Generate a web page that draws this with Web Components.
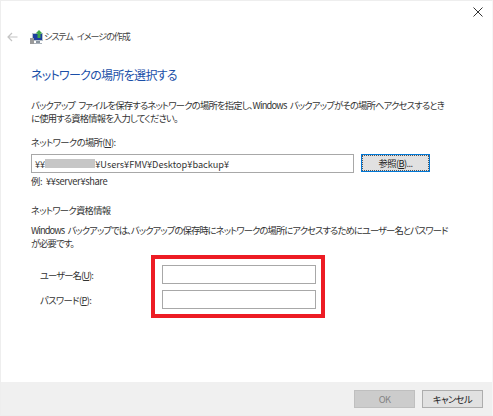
<!DOCTYPE html>
<html lang="ja">
<head>
<meta charset="utf-8">
<title>システム イメージの作成</title>
<style>
    html, body { margin: 0; padding: 0; background: #fff; }
    body { font-family: "Noto Sans CJK JP", "Noto Sans", sans-serif; font-size: 9.3px; letter-spacing: -0.6px; word-spacing: 2px; color: #222; font-feature-settings: "palt"; }
</style>
</head>
<body>
<wizard-dialog>
    <wizard-header slot="header">システム イメージの作成</wizard-header>
    <wizard-heading>ネットワークの場所を選択する</wizard-heading>
    <wizard-text top="14" tight="0.8">バックアップ ファイルを保存するネットワークの場所を指定し、Windows バックアップがその場所へアクセスするとき<br>に使用する資格情報を入力してください。</wizard-text>
    <wizard-text top="11">ネットワークの場所(<u>N</u>):</wizard-text>
    <location-row>¥¥<redacted-text></redacted-text>¥Users¥FMV¥Desktop¥backup¥</location-row>
    <wizard-text top="2" tight="0.35">例: ¥¥server¥share</wizard-text>
    <wizard-text top="16" tight="0.7">ネットワーク資格情報</wizard-text>
    <wizard-text top="7" tight="0.9">Windows バックアップでは、バックアップの保存時にネットワークの場所にアクセスするためにユーザー名とパスワード<br>が必要です。</wizard-text>
    <credential-form></credential-form>
    <wizard-footer slot="footer"></wizard-footer>
</wizard-dialog>

<script>
class WizardDialog extends HTMLElement {
    connectedCallback() {
        this.attachShadow({ mode: 'open' });
        this.shadowRoot.innerHTML = `
            <style>
                :host {
                    display: flex;
                    flex-direction: column;
                    box-sizing: border-box;
                    width: 493px;
                    height: 416px;
                    border: 1px solid #eee;
                    border-right-color: #f6f6f6;
                    background: #fff;
                }
                .body {
                    flex: 1;
                    display: flex;
                    flex-direction: column;
                    padding: 0 0 0 30px;
                }
            </style>
            <slot name="header"></slot>
            <div class="body"><slot></slot></div>
            <slot name="footer"></slot>
        `;
    }
}

class WizardHeader extends HTMLElement {
    connectedCallback() {
        this.attachShadow({ mode: 'open' });
        this.shadowRoot.innerHTML = `
            <style>
                :host { display: block; height: 64px; }
                .close { display: flex; justify-content: flex-end; padding: 4px 7px 0 0; height: 20px; }
                .nav { display: flex; align-items: center; height: 20px; margin-top: 2px; color: #444; font-size: 9px; letter-spacing: -1px; word-spacing: 3px; }
                .back { margin-left: 6px; }
                .app { margin-left: 12px; }
                .title { margin-left: 7px; line-height: 20px; }
            </style>
            <div class="close">
                <svg width="14" height="14" viewBox="0 0 14 14"><path d="M2.5 2.5 L11.5 11.5 M11.5 2.5 L2.5 11.5" stroke="#333" stroke-width="1" fill="none"/></svg>
            </div>
            <div class="nav">
                <svg class="back" width="11" height="10" viewBox="0 0 11 10"><path d="M5 1 L1 5 L5 9 M1 5 H10.5" stroke="#c4c4c4" stroke-width="1.2" fill="none"/></svg>
                <svg class="app" width="14" height="15" viewBox="0 0 14 15">
                    <rect x="2" y="3" width="11" height="8" fill="#b8c2cc"/>
                    <rect x="3" y="4" width="9" height="6" fill="#1c3f9e"/>
                    <rect x="0" y="8" width="4" height="6" fill="#9a9a9a"/>
                    <rect x="6" y="11" width="4" height="2" fill="#8a94a0"/>
                    <rect x="4" y="13" width="8" height="1" fill="#aab2bb"/>
                    <path d="M9 0 L12.5 3.5 H10.5 V8 H7.5 V3.5 H5.5 Z" fill="#3fa648"/>
                </svg>
                <slot class="title"></slot>
            </div>
        `;
    }
}

class WizardHeading extends HTMLElement {
    connectedCallback() {
        this.attachShadow({ mode: 'open' });
        this.shadowRoot.innerHTML = `
            <style>
                :host { display: block; color: #1b4fa8; font-size: 12px; letter-spacing: -0.7px; line-height: 20px; white-space: nowrap; }
            </style>
            <slot></slot>
        `;
    }
}

class WizardText extends HTMLElement {
    connectedCallback() {
        const tight = this.getAttribute('tight') || '0.6';
        this.attachShadow({ mode: 'open' });
        this.shadowRoot.innerHTML = `
            <style>
                :host { display: block; line-height: 13px; white-space: nowrap; color: #333; letter-spacing: -${tight}px; margin-top: ${this.getAttribute('top') || 0}px; }
            </style>
            <slot></slot>
        `;
    }
}

class TextBox extends HTMLElement {
    connectedCallback() {
        this.attachShadow({ mode: 'open' });
        this.shadowRoot.innerHTML = `
            <style>
                :host {
                    display: flex;
                    align-items: center;
                    box-sizing: border-box;
                    border: 1px solid #a8a8a8;
                    background: #fff;
                    padding-left: 3px;
                    font-size: 9.2px;
                    letter-spacing: 0;
                    color: #333;
                    white-space: nowrap;
                }
            </style>
            <slot></slot>
        `;
    }
}

class RedactedText extends HTMLElement {
    connectedCallback() {
        this.attachShadow({ mode: 'open' });
        this.shadowRoot.innerHTML = `
            <style>
                :host { display: inline-block; width: 50px; height: 9px; background: #c6c6c6; }
            </style>
        `;
    }
}

class WinButton extends HTMLElement {
    connectedCallback() {
        this.attachShadow({ mode: 'open' });
        this.shadowRoot.innerHTML = `
            <style>
                :host {
                    display: flex;
                    align-items: center;
                    justify-content: center;
                    box-sizing: border-box;
                    width: 61px;
                    height: 18px;
                    border: 1px solid #adadad;
                    background: #e1e1e1;
                    color: #222;
                }
                :host([state="focus"]) {
                    width: 69px;
                    border: 1px solid #0078d7;
                    outline: 1px dotted #555;
                    outline-offset: -2px;
                }
                :host([state="disabled"]) {
                    background: #ccc;
                    border-color: #bfbfbf;
                    color: #838383;
                }
            </style>
            <slot></slot>
        `;
    }
}

class LocationRow extends HTMLElement {
    connectedCallback() {
        this.attachShadow({ mode: 'open' });
        this.shadowRoot.innerHTML = `
            <style>
                :host { display: flex; align-items: flex-start; gap: 7px; margin-top: 5px; }
                text-box { width: 323px; height: 19px; }
            </style>
            <text-box><slot></slot></text-box>
            <win-button state="focus">参照(<u>B</u>)...</win-button>
        `;
    }
}

class CredentialForm extends HTMLElement {
    connectedCallback() {
        this.attachShadow({ mode: 'open' });
        this.shadowRoot.innerHTML = `
            <style>
                :host {
                    display: grid;
                    grid-template-columns: 131px 154px;
                    grid-auto-rows: 19px;
                    row-gap: 6px;
                    align-items: center;
                    margin-top: 15px;
                    color: #333;
                }
                .label { padding-left: 9px; white-space: nowrap; }
                .inputs { grid-column: 2; grid-row: 1 / span 2; display: flex; flex-direction: column; gap: 6px; position: relative; }
                text-box { height: 19px; }
                /* annotation drawn over the form */
                .mark {
                    position: absolute;
                    left: -11px;
                    top: -10px;
                    width: 174px;
                    height: 63px;
                    box-sizing: border-box;
                    border: 4px solid #ed1c24;
                }
            </style>
            <div class="label" style="grid-row: 1; letter-spacing: -0.9px">ユーザー名(<u>U</u>):</div>
            <div class="label" style="grid-row: 2">パスワード(<u>P</u>):</div>
            <div class="inputs">
                <text-box></text-box>
                <text-box></text-box>
                <div class="mark"></div>
            </div>
        `;
    }
}

class WizardFooter extends HTMLElement {
    connectedCallback() {
        this.attachShadow({ mode: 'open' });
        this.shadowRoot.innerHTML = `
            <style>
                :host {
                    display: flex;
                    justify-content: flex-end;
                    gap: 7px;
                    box-sizing: border-box;
                    height: 33px;
                    padding: 8px 9px 0 0;
                    background: #f0f0f0;
                }
            </style>
            <win-button state="disabled">OK</win-button>
            <win-button>キャンセル</win-button>
        `;
    }
}

customElements.define('wizard-dialog', WizardDialog);
customElements.define('wizard-header', WizardHeader);
customElements.define('wizard-heading', WizardHeading);
customElements.define('wizard-text', WizardText);
customElements.define('text-box', TextBox);
customElements.define('redacted-text', RedactedText);
customElements.define('win-button', WinButton);
customElements.define('location-row', LocationRow);
customElements.define('credential-form', CredentialForm);
customElements.define('wizard-footer', WizardFooter);
</script>
</body>
</html>
